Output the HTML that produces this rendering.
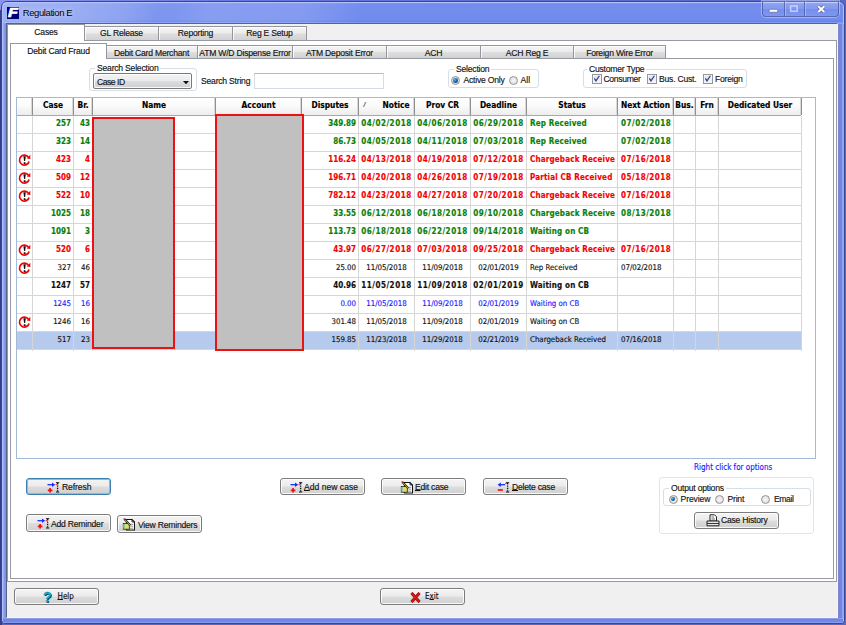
<!DOCTYPE html>
<html lang="en"><head><meta charset="utf-8"><title>Regulation E</title>
<style>
*{box-sizing:border-box;margin:0;padding:0}
html,body{width:846px;height:625px;overflow:hidden}
body{background:#5f66b8;font-family:"Liberation Sans",Arial,sans-serif;font-size:8.6px;letter-spacing:-.22px;color:#111;position:relative;-webkit-text-stroke:.14px}
.abs,.abs *{position:absolute}
#bgL{left:0;top:0;width:2px;height:625px;background:#333f8c}
#bgT{left:0;top:0;width:846px;height:2px;background:linear-gradient(90deg,#8a94f0 0,#6676dc 30%,#5866c6 100%)}
#bgTL{left:0;top:0;width:10px;height:10px;background:#8a94f0}
#win{left:1px;top:1px;width:844px;height:623px;border:1px solid #3c4690;border-radius:6px 6px 4px 4px;
 background:linear-gradient(180deg,#8ea4f6 0,#748cee 2px,#718cee 18px,#6480ea 20px,#9fb3f8 21px,#7088ec 22px,#7088ec 100%)}
#winhl{left:2px;top:2px;width:842px;height:621px;border:1px solid rgba(190,205,255,.8);border-radius:5px 5px 3px 3px}
#glare{left:3px;top:3px;width:380px;height:20px;background:linear-gradient(105deg,rgba(255,255,255,.34) 0,rgba(255,255,255,.30) 60px,rgba(255,255,255,.20) 120px,rgba(255,255,255,.09) 150px,rgba(255,255,255,.09) 170px,rgba(255,255,255,.15) 200px,rgba(255,255,255,.13) 290px,rgba(255,255,255,0) 350px)}
#sideL{left:3px;top:24px;width:3px;height:594px;background:linear-gradient(90deg,#a4b5fb 0,#8098ea 50%,#7c92e6 100%)}
#sideR{left:838px;top:24px;width:6px;height:594px;background:linear-gradient(90deg,#8088bc 0,#7888dc 1px,#7484e4 1.5px,#7484e4 3.5px,#90a2f2 4.5px,#98aaf4 6px)}
#botF{left:3px;top:618px;width:840px;height:5px;background:linear-gradient(180deg,#9aaaf0 0,#7484e4 1.5px,#7488e6 3.5px,#92a4f2 5px)}
#ticon{left:7px;top:7px;width:12px;height:12px;background:#00007c}
#ticon b{left:1.2px;top:-1.6px;font:italic bold 13.5px "Liberation Sans",sans-serif;color:#fff;transform:scaleX(1.2);transform-origin:0 0;-webkit-text-stroke:.7px #fff}
#title{left:22.8px;top:7px;font-size:9.5px;letter-spacing:-.42px;color:#000;-webkit-text-stroke:0;white-space:nowrap;text-shadow:0 0 5px rgba(255,255,255,.8)}
#caps{left:762px;top:1px;width:77px;height:15.5px;border:1px solid rgba(70,85,150,.75);border-top:none;border-radius:0 0 4px 4px;
 background:linear-gradient(180deg,rgba(255,255,255,.22) 0,rgba(255,255,255,.12) 50%,rgba(255,255,255,.02) 51%,rgba(255,255,255,.10) 100%);box-shadow:0 0 0 1px rgba(200,212,255,.55)}
#caps i{top:0;width:1px;height:15px;background:rgba(70,85,150,.7);box-shadow:1px 0 0 rgba(200,212,255,.5)}
#client{left:6px;top:23px;width:832px;height:595px;background:#f0f0f0;border:1px solid #5a6286;border-right-color:#f4f6fb;border-bottom-color:#f4f6fb}
/* tab panes */
.pane{background:#fff;border:1px solid #979aa3}
.tab{border:1px solid #93969f;border-bottom:none;text-align:center;white-space:nowrap;
 background:linear-gradient(180deg,#f4f4f4 0,#ececec 48%,#dedede 52%,#d2d2d2 100%);box-shadow:inset 1px 1px 0 rgba(255,255,255,.8)}
.tab.sel{background:#fff;box-shadow:none}
.tab span{left:0;right:0;text-align:center}
.lbl{white-space:nowrap}
.gb{border:1px solid #d5dfe5;border-radius:3px}
.gb .lg{background:#fff;padding:0 2px;white-space:nowrap}
.btn{border:1px solid #7c7c7c;border-radius:3px;background:linear-gradient(180deg,#f4f4f4 0,#ebebeb 48%,#dddddd 52%,#cfcfcf 100%);box-shadow:inset 0 0 0 1px rgba(255,255,255,.85)}
.btn .t{white-space:nowrap}
.btn.foc{border-color:#3c7fb1;box-shadow:inset 0 0 0 1px #48d8fb}
.abs u{position:static;text-decoration:underline;text-decoration-thickness:.6px;text-underline-offset:.3px}
.radio{width:9px;height:9px;border-radius:50%;border:1px solid #969696;background:radial-gradient(circle at 50% 50%,#f8f8f8 0,#e6e6e6 55%,#cfcfcf 100%)}
.radio.on::after{content:"";position:absolute;left:1.2px;top:1.2px;width:4.6px;height:4.6px;border-radius:50%;background:radial-gradient(circle at 35% 35%,#58b8ec 0,#145ca6 55%,#0a356c 100%)}
.chk{width:9.5px;height:9.5px;border:1px solid #969696;background:linear-gradient(135deg,#dedede 0,#f8f8f8 100%);box-shadow:inset 0 0 0 1px #f4f4f4}
/* grid */
#grid{left:16px;top:97px;width:800px;height:362px;border:1px solid #a3bad9;background:#fff}
#ghead{left:17px;top:98px;width:784px;height:18px;background:linear-gradient(180deg,#ffffff 0,#fbfbfb 45%,#ededed 100%);border-bottom:1px solid #a8a8a8}
.hc{top:98px;height:17px;text-align:center;font:bold 8.3px/15.6px "DejaVu Sans Condensed","DejaVu Sans",sans-serif;color:#000;white-space:nowrap;border-right:1px solid #8f8f8f;box-shadow:inset -2px 0 0 -1px #d8d8d8}
.hc .srt{left:3.5px;top:2.5px;font:normal 7px/8px "Liberation Sans",sans-serif;color:#777;transform:scaleX(1.6);transform-origin:0 0}
.vl{top:116px;width:1px;height:235px;background:#d6d6d6}
.row{left:17px;width:784px;height:18px;border-bottom:1px solid #d6d6d6}
.row.sel{background:#b5caec}
.c{top:-.4px;height:17px;white-space:nowrap;overflow:hidden;font:7.8px/15.5px "DejaVu Sans Condensed","DejaVu Sans",sans-serif}
.b .c{font-weight:bold;font-size:8px}
.R{text-align:right;padding-right:2px}
.C{text-align:center;letter-spacing:.07px}
.b .C,.b .L2{letter-spacing:.5px}
.L{text-align:left;padding-left:3px}
.L2{text-align:left;padding-left:3px}
.g{color:#078007}.r{color:#f40000}.k{color:#111}.u{color:#1a1aff}
.ico{left:1px;top:2px;overflow:visible}
.redbox{background:#c0c0c0;border:2px solid #ee1111}
.tah{font-family:"DejaVu Sans Condensed","DejaVu Sans",sans-serif;font-size:8px}
.c,.hc,.tah{letter-spacing:0}
.b .L{letter-spacing:.17px}

</style></head>
<body class="abs">
<svg width="0" height="0" style="position:absolute"><defs>
<g id="rem"><path d="M10.4 3.3 A4.9 4.9 0 1 0 11.1 7.4" fill="none" stroke="#f20000" stroke-width="1.7"/><path d="M12.3 0.7 V4.9 L8.8 4.5 Z" fill="#f20000"/><path d="M5.4 2.2 H7.8 L7.1 7 H6.1 Z" fill="#111"/><rect x="5.6" y="8.3" width="2" height="1.8" rx=".5" fill="#111"/></g>
<g id="addi"><path d="M0.5 2.7H6" stroke="#1a2cff" stroke-width="1.3"/><path d="M5 0.4L8.2 2.7L5 5Z" fill="#1a2cff"/><path d="M0.8 8.3H5.4M3.1 6V10.6" stroke="#f01010" stroke-width="1.7"/><path d="M9 0.7H12.2M9 10H12.2" stroke="#111" stroke-width="1"/><path d="M10.6 1V9.7" stroke="#111" stroke-width="1.3" stroke-dasharray="1.4 1"/><rect x="8.6" y="2.1" width="1.2" height="1.2" fill="#f01010"/></g>
<g id="deli"><path d="M2.8 2.7H8.2" stroke="#1a2cff" stroke-width="1.3"/><path d="M3.8 0.4L0.6 2.7L3.8 5Z" fill="#1a2cff"/><path d="M0.8 8H5.8" stroke="#f01010" stroke-width="1.7"/><path d="M9 0.7H12.2M9 10H12.2" stroke="#111" stroke-width="1"/><path d="M10.6 1V9.7" stroke="#111" stroke-width="1.3" stroke-dasharray="1.4 1"/><rect x="8.4" y="0.8" width="1.2" height="1.2" fill="#f01010"/></g>
<g id="edi"><path d="M4.5 1.5H10L12.5 4V12H4.5Z" fill="#fff" stroke="#111" stroke-width="1.1"/><path d="M10 1.5V4H12.5" fill="none" stroke="#111" stroke-width=".8"/><path d="M8.5 6.3H11M8.5 8.2H11M7 10.2H11" stroke="#777" stroke-width=".8"/><rect x="1.3" y="5.4" width="6" height="5.8" fill="#e6de58" stroke="#222" stroke-width=".8"/><rect x="1" y="6" width="1.5" height="4.6" fill="#20c0d8"/><path d="M2.3 1L8.4 7.4" stroke="#2a2a2a" stroke-width="2"/><path d="M2.8 1.6L8 7" stroke="#d8c428" stroke-width=".8"/><circle cx="2.3" cy="1" r=".8" fill="#c82020"/></g>
<g id="prn"><path d="M4 0.8H8.5L10.5 2.8V7H4Z" fill="#fff" stroke="#222" stroke-width="1"/><path d="M5.5 3H8M5.5 5H9" stroke="#444" stroke-width=".8"/><path d="M1 7H13V11.8H1Z" fill="#e8e8e8" stroke="#222" stroke-width="1"/><path d="M1 9.5H13" stroke="#222" stroke-width=".9"/></g>
</defs></svg>
<div id="bgL"></div><div id="bgT"></div><div id="bgTL"></div>
<div id="win"></div>
<div id="winhl"></div><div id="glare"></div>
<div id="sideL"></div><div id="sideR"></div><div id="botF"></div>
<div id="ticon"><b>F</b></div>
<div id="title">Regulation E</div>
<div id="caps"><i style="left:20.5px"></i><i style="left:40.5px"></i>
 <svg style="left:0;top:0" width="77" height="16" viewBox="0 0 77 16">
  <rect x="6.2" y="8.3" width="8.4" height="3" rx="1" fill="#fff" stroke="#5a6496" stroke-width=".7"/>
  <rect x="27.6" y="5" width="6.6" height="5.2" fill="none" stroke="#c9d3ff" stroke-width="1.4"/>
  <path d="M55.3 5.2 L61.3 11 M61.3 5.2 L55.3 11" stroke="#5a6496" stroke-width="3.3" fill="none"/>
  <path d="M55.3 5.2 L61.3 11 M61.3 5.2 L55.3 11" stroke="#fff" stroke-width="2" fill="none"/>
 </svg>
</div>
<div id="client"></div>
<!-- everything below positioned in page coordinates -->
<div id="ui" style="left:0;top:0;width:846px;height:625px">
 <!-- outer tabs -->
 <div class="pane" style="left:7px;top:40px;width:830px;height:542px"></div>
 <div class="tab" style="left:84px;top:26px;width:75px;height:14px"><span style="top:1.4px">GL Release</span></div>
 <div class="tab" style="left:158px;top:26px;width:75px;height:14px"><span style="top:1.4px">Reporting</span></div>
 <div class="tab" style="left:232px;top:26px;width:75px;height:14px"><span style="top:1.4px">Reg E Setup</span></div>
 <div class="tab sel" style="left:7px;top:24px;width:78px;height:17px"><span style="top:2px">Cases</span></div>
 <!-- inner tabs -->
 <div class="pane" style="left:10px;top:58px;width:824px;height:521px"></div>
 <div class="tab" style="left:105px;top:45px;width:93px;height:13px"><span style="top:1.5px">Debit Card Merchant</span></div>
 <div class="tab" style="left:197px;top:45px;width:96px;height:13px"><span style="top:1.5px">ATM W/D Dispense Error</span></div>
 <div class="tab" style="left:292px;top:45px;width:95px;height:13px"><span style="top:1.5px">ATM Deposit Error</span></div>
 <div class="tab" style="left:386px;top:45px;width:95px;height:13px"><span style="top:1.5px">ACH</span></div>
 <div class="tab" style="left:480px;top:45px;width:94px;height:13px"><span style="top:1.5px">ACH Reg E</span></div>
 <div class="tab" style="left:573px;top:45px;width:93px;height:13px"><span style="top:1.5px">Foreign Wire Error</span></div>
 <div class="tab sel" style="left:10px;top:43px;width:97px;height:16px"><span style="top:1.5px">Debit Card Fraud</span></div>

 <!-- search selection -->
 <div class="gb" style="left:89px;top:68px;width:108px;height:23px"><span class="lg" style="left:5px;top:-6.2px">Search Selection</span></div>
 <div class="btn" style="left:93px;top:73px;width:99px;height:16px;border-radius:2px;border-color:#787878"><span class="t" style="letter-spacing:-0.47px;left:3px;top:2.5px">Case ID</span>
  <svg style="left:89px;top:6.5px" width="6" height="3.3" viewBox="0 0 6 3.3"><path d="M0 0H6L3 3.3Z" fill="#111"/></svg></div>
 <span class="lbl" style="left:201px;top:76px">Search String</span>
 <div style="left:254px;top:73px;width:130px;height:16px;background:#fff;border:1px solid #d4dae6;border-top-color:#b3b9c6;border-radius:1px"></div>
 <!-- selection -->
 <div class="gb" style="left:448px;top:69px;width:91px;height:19px"><span class="lg" style="left:5px;top:-6.2px">Selection</span></div>
 <div class="radio on" style="left:451px;top:76px"></div><span class="lbl" style="left:463.5px;top:74.5px">Active Only</span>
 <div class="radio" style="left:508.5px;top:76px"></div><span class="lbl" style="letter-spacing:0px;left:520.5px;top:74.5px">All</span>
 <!-- customer type -->
 <div class="gb" style="left:583px;top:69px;width:164px;height:19px"><span class="lg" style="left:3px;top:-6.2px">Customer Type</span></div>
 <div class="chk" style="left:592px;top:74.3px"><svg style="left:0;top:0" width="7.5" height="7.5" viewBox="0 0 8 8"><path d="M1.4 3.6L3.2 6.2L6.8 0.8" stroke="#2b3f9e" stroke-width="1.3" fill="none"/></svg></div><span class="lbl" style="letter-spacing:-0.34px;left:603.5px;top:74px">Consumer</span>
 <div class="chk" style="left:647.3px;top:74.3px"><svg style="left:0;top:0" width="7.5" height="7.5" viewBox="0 0 8 8"><path d="M1.4 3.6L3.2 6.2L6.8 0.8" stroke="#2b3f9e" stroke-width="1.3" fill="none"/></svg></div><span class="lbl" style="left:659px;top:74px">Bus. Cust.</span>
 <div class="chk" style="left:703px;top:74.3px"><svg style="left:0;top:0" width="7.5" height="7.5" viewBox="0 0 8 8"><path d="M1.4 3.6L3.2 6.2L6.8 0.8" stroke="#2b3f9e" stroke-width="1.3" fill="none"/></svg></div><span class="lbl" style="left:715px;top:74px">Foreign</span>

 <!-- grid -->
 <div id="grid"></div>
 <div id="ghead"></div>
<div class="hc" style="left:17px;width:16px"></div>
<div class="hc" style="left:33px;width:41px">Case</div>
<div class="hc" style="left:74px;width:19px">Br.</div>
<div class="hc" style="left:93px;width:123px">Name</div>
<div class="hc" style="left:216px;width:86px">Account</div>
<div class="hc" style="left:302px;width:57px">Disputes</div>
<div class="hc" style="left:359px;width:56px"><i class="srt">/</i><span style="position:absolute;left:23.5px;top:0">Notice</span></div>
<div class="hc" style="left:415px;width:56px">Prov CR</div>
<div class="hc" style="left:471px;width:56px">Deadline</div>
<div class="hc" style="left:527px;width:91px">Status</div>
<div class="hc" style="left:618px;width:56px">Next Action</div>
<div class="hc" style="left:674px;width:22px">Bus.</div>
<div class="hc" style="left:696px;width:23px">Frn</div>
<div class="hc" style="left:719px;width:83px">Dedicated User</div>
<div class="row g b" style="top:116px">
<span class="c R" style="left:16px;width:40px">257</span>
<span class="c R" style="left:57px;width:18px">43</span>
<span class="c R" style="left:285px;width:56px">349.89</span>
<span class="c C" style="left:342px;width:55px">04/02/2018</span>
<span class="c C" style="left:398px;width:55px">04/06/2018</span>
<span class="c C" style="left:454px;width:55px">06/29/2018</span>
<span class="c L" style="left:510px;width:88px">Rep Received</span>
<span class="c L2" style="left:601px;width:55px">07/02/2018</span>
</div>
<div class="row g b" style="top:134px">
<span class="c R" style="left:16px;width:40px">323</span>
<span class="c R" style="left:57px;width:18px">14</span>
<span class="c R" style="left:285px;width:56px">86.73</span>
<span class="c C" style="left:342px;width:55px">04/05/2018</span>
<span class="c C" style="left:398px;width:55px">04/11/2018</span>
<span class="c C" style="left:454px;width:55px">07/03/2018</span>
<span class="c L" style="left:510px;width:88px">Rep Received</span>
<span class="c L2" style="left:601px;width:55px">07/02/2018</span>
</div>
<div class="row r b" style="top:152px">
<svg class="ico" viewBox="0 0 13 13" width="13" height="13"><use href="#rem"/></svg>
<span class="c R" style="left:16px;width:40px">423</span>
<span class="c R" style="left:57px;width:18px">4</span>
<span class="c R" style="left:285px;width:56px">116.24</span>
<span class="c C" style="left:342px;width:55px">04/13/2018</span>
<span class="c C" style="left:398px;width:55px">04/19/2018</span>
<span class="c C" style="left:454px;width:55px">07/12/2018</span>
<span class="c L" style="left:510px;width:88px">Chargeback Received</span>
<span class="c L2" style="left:601px;width:55px">07/16/2018</span>
</div>
<div class="row r b" style="top:170px">
<svg class="ico" viewBox="0 0 13 13" width="13" height="13"><use href="#rem"/></svg>
<span class="c R" style="left:16px;width:40px">509</span>
<span class="c R" style="left:57px;width:18px">12</span>
<span class="c R" style="left:285px;width:56px">196.71</span>
<span class="c C" style="left:342px;width:55px">04/20/2018</span>
<span class="c C" style="left:398px;width:55px">04/26/2018</span>
<span class="c C" style="left:454px;width:55px">07/19/2018</span>
<span class="c L" style="left:510px;width:88px">Partial CB Received</span>
<span class="c L2" style="left:601px;width:55px">05/18/2018</span>
</div>
<div class="row r b" style="top:188px">
<svg class="ico" viewBox="0 0 13 13" width="13" height="13"><use href="#rem"/></svg>
<span class="c R" style="left:16px;width:40px">522</span>
<span class="c R" style="left:57px;width:18px">10</span>
<span class="c R" style="left:285px;width:56px">782.12</span>
<span class="c C" style="left:342px;width:55px">04/23/2018</span>
<span class="c C" style="left:398px;width:55px">04/27/2018</span>
<span class="c C" style="left:454px;width:55px">07/20/2018</span>
<span class="c L" style="left:510px;width:88px">Chargeback Received</span>
<span class="c L2" style="left:601px;width:55px">07/16/2018</span>
</div>
<div class="row g b" style="top:206px">
<span class="c R" style="left:16px;width:40px">1025</span>
<span class="c R" style="left:57px;width:18px">18</span>
<span class="c R" style="left:285px;width:56px">33.55</span>
<span class="c C" style="left:342px;width:55px">06/12/2018</span>
<span class="c C" style="left:398px;width:55px">06/18/2018</span>
<span class="c C" style="left:454px;width:55px">09/10/2018</span>
<span class="c L" style="left:510px;width:88px">Chargeback Received</span>
<span class="c L2" style="left:601px;width:55px">08/13/2018</span>
</div>
<div class="row g b" style="top:224px">
<span class="c R" style="left:16px;width:40px">1091</span>
<span class="c R" style="left:57px;width:18px">3</span>
<span class="c R" style="left:285px;width:56px">113.73</span>
<span class="c C" style="left:342px;width:55px">06/18/2018</span>
<span class="c C" style="left:398px;width:55px">06/22/2018</span>
<span class="c C" style="left:454px;width:55px">09/14/2018</span>
<span class="c L" style="left:510px;width:88px">Waiting on CB</span>
</div>
<div class="row r b" style="top:242px">
<svg class="ico" viewBox="0 0 13 13" width="13" height="13"><use href="#rem"/></svg>
<span class="c R" style="left:16px;width:40px">520</span>
<span class="c R" style="left:57px;width:18px">6</span>
<span class="c R" style="left:285px;width:56px">43.97</span>
<span class="c C" style="left:342px;width:55px">06/27/2018</span>
<span class="c C" style="left:398px;width:55px">07/03/2018</span>
<span class="c C" style="left:454px;width:55px">09/25/2018</span>
<span class="c L" style="left:510px;width:88px">Chargeback Received</span>
<span class="c L2" style="left:601px;width:55px">07/16/2018</span>
</div>
<div class="row k" style="top:260px">
<svg class="ico" viewBox="0 0 13 13" width="13" height="13"><use href="#rem"/></svg>
<span class="c R" style="left:16px;width:40px">327</span>
<span class="c R" style="left:57px;width:18px">46</span>
<span class="c R" style="left:285px;width:56px">25.00</span>
<span class="c C" style="left:342px;width:55px">11/05/2018</span>
<span class="c C" style="left:398px;width:55px">11/09/2018</span>
<span class="c C" style="left:454px;width:55px">02/01/2019</span>
<span class="c L" style="left:510px;width:88px">Rep Received</span>
<span class="c L2" style="left:601px;width:55px">07/02/2018</span>
</div>
<div class="row k b" style="top:278px">
<span class="c R" style="left:16px;width:40px">1247</span>
<span class="c R" style="left:57px;width:18px">57</span>
<span class="c R" style="left:285px;width:56px">40.96</span>
<span class="c C" style="left:342px;width:55px">11/05/2018</span>
<span class="c C" style="left:398px;width:55px">11/09/2018</span>
<span class="c C" style="left:454px;width:55px">02/01/2019</span>
<span class="c L" style="left:510px;width:88px">Waiting on CB</span>
</div>
<div class="row u" style="top:296px">
<span class="c R" style="left:16px;width:40px">1245</span>
<span class="c R" style="left:57px;width:18px">16</span>
<span class="c R" style="left:285px;width:56px">0.00</span>
<span class="c C" style="left:342px;width:55px">11/05/2018</span>
<span class="c C" style="left:398px;width:55px">11/09/2018</span>
<span class="c C" style="left:454px;width:55px">02/01/2019</span>
<span class="c L" style="left:510px;width:88px">Waiting on CB</span>
</div>
<div class="row k" style="top:314px">
<svg class="ico" viewBox="0 0 13 13" width="13" height="13"><use href="#rem"/></svg>
<span class="c R" style="left:16px;width:40px">1246</span>
<span class="c R" style="left:57px;width:18px">16</span>
<span class="c R" style="left:285px;width:56px">301.48</span>
<span class="c C" style="left:342px;width:55px">11/05/2018</span>
<span class="c C" style="left:398px;width:55px">11/09/2018</span>
<span class="c C" style="left:454px;width:55px">02/01/2019</span>
<span class="c L" style="left:510px;width:88px">Waiting on CB</span>
</div>
<div class="row k sel" style="top:332px">
<span class="c R" style="left:16px;width:40px">517</span>
<span class="c R" style="left:57px;width:18px">23</span>
<span class="c R" style="left:285px;width:56px">159.85</span>
<span class="c C" style="left:342px;width:55px">11/23/2018</span>
<span class="c C" style="left:398px;width:55px">11/29/2018</span>
<span class="c C" style="left:454px;width:55px">02/21/2019</span>
<span class="c L" style="left:510px;width:88px">Chargeback Received</span>
<span class="c L2" style="left:601px;width:55px">07/16/2018</span>
</div>
<div class="vl" style="left:32px"></div>
<div class="vl" style="left:73px"></div>
<div class="vl" style="left:92px"></div>
<div class="vl" style="left:215px"></div>
<div class="vl" style="left:301px"></div>
<div class="vl" style="left:358px"></div>
<div class="vl" style="left:414px"></div>
<div class="vl" style="left:470px"></div>
<div class="vl" style="left:526px"></div>
<div class="vl" style="left:617px"></div>
<div class="vl" style="left:673px"></div>
<div class="vl" style="left:695px"></div>
<div class="vl" style="left:718px"></div>
<div class="vl" style="left:801px"></div>
 <div class="redbox" style="left:92px;top:117px;width:83px;height:232px"></div>
 <div class="redbox" style="left:215px;top:114px;width:89px;height:237px"></div>

 <!-- bottom buttons -->
 <div class="btn foc" style="left:26px;top:478px;width:85px;height:17px"><svg style="left:19.5px;top:2.6px" width="13" height="11" viewBox="0 0 13 11"><use href="#addi"/></svg><span class="t" style="letter-spacing:-0.1px;left:35px;top:3px">Refresh</span></div>
 <div class="btn" style="left:280px;top:478px;width:85px;height:17px"><svg style="left:9px;top:3px" width="13" height="11" viewBox="0 0 13 11"><use href="#addi"/></svg><span class="t" style="letter-spacing:0px;left:23px;top:3px"><u>A</u>dd new case</span></div>
 <div class="btn" style="left:381px;top:478px;width:85px;height:17px"><svg style="left:18px;top:2px" width="13" height="13" viewBox="0 0 13 13"><use href="#edi"/></svg><span class="t" style="left:33px;top:3px"><u>E</u>dit case</span></div>
 <div class="btn" style="left:483px;top:478px;width:85px;height:17px"><svg style="left:12.6px;top:2.6px" width="13" height="11" viewBox="0 0 13 11"><use href="#deli"/></svg><span class="t" style="left:28px;top:3px"><u>D</u>elete case</span></div>
 <div class="btn" style="left:26px;top:514px;width:85px;height:18px"><svg style="left:10px;top:3px" width="13" height="11" viewBox="0 0 13 11"><use href="#addi"/></svg><span class="t" style="left:24px;top:3.5px">Add Reminder</span></div>
 <div class="btn" style="left:117px;top:515px;width:85px;height:18px"><svg style="left:4px;top:2px" width="13" height="13" viewBox="0 0 13 13"><use href="#edi"/></svg><span class="t" style="left:20px;top:3.5px">View Reminders</span></div>

 <span class="lbl tah" style="left:694px;top:463.4px;color:#1c1cff">Right click for options</span>
 <div class="gb" style="left:659px;top:477px;width:155px;height:57px;border-color:#dfe6ea"></div>
 <div class="gb" style="left:663px;top:488px;width:148px;height:18px"><span class="lg" style="left:5px;top:-6.2px">Output options</span></div>
 <div class="radio on" style="left:668.7px;top:494.6px"></div><span class="lbl" style="letter-spacing:-0.1px;left:680.5px;top:493.5px">Preview</span>
 <div class="radio" style="left:714.7px;top:494.6px"></div><span class="lbl" style="left:727.5px;top:493.5px">Print</span>
 <div class="radio" style="left:761.4px;top:494.6px"></div><span class="lbl" style="letter-spacing:-0.42px;left:774px;top:493.5px">Email</span>
 <div class="btn" style="left:694px;top:511.5px;width:84.5px;height:17.5px"><svg style="left:10.5px;top:1.7px" width="14" height="13" viewBox="0 0 14 13"><use href="#prn"/></svg><span class="t" style="left:26px;top:2.7px">Case History</span></div>

 <div class="btn" style="left:13.5px;top:588.4px;width:85px;height:17px"><span class="t" style="left:28.5px;top:-.5px;font:bold 14.5px/16px 'Liberation Sans',sans-serif;letter-spacing:0;color:#12b4cc;-webkit-text-stroke:.3px #0c7a9c;text-shadow:.8px .8px 0 #0a4470">?</span><span class="t tah" style="left:43px;top:3px"><u>H</u>elp</span></div>
 <div class="btn" style="left:380px;top:588px;width:85px;height:17px"><svg style="left:29px;top:3px" width="11" height="11" viewBox="0 0 11 11"><path d="M1.5 1L9.5 10M9.5 1L1.5 10" stroke="#7a0d0d" stroke-width="3" fill="none"/><path d="M1.5 1L9.5 10M9.5 1L1.5 10" stroke="#d81616" stroke-width="1.9" fill="none"/></svg><span class="t tah" style="left:44px;top:3px">E<u>x</u>it</span></div>
</div>
</body></html>
